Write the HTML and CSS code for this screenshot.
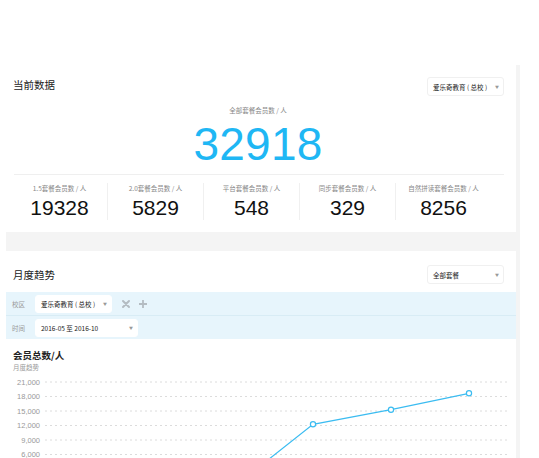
FILE: index.html
```html
<!DOCTYPE html>
<html lang="zh">
<head>
<meta charset="utf-8">
<link rel="stylesheet" href="styles.css">
</head>
<body>
<div class="wrap">
  <section class="card card-current">
    <div class="card-head card-head-current">
      <h2 class="card-title">当前数据</h2>
      <div class="select select-head"><span>爱乐奇教育 ( 总校 )</span><span class="arrow">▼</span></div>
    </div>
    <div class="total">
      <div class="total-label">全部套餐会员数 / 人</div>
      <div class="total-value">32918</div>
    </div>
    <div class="divider"></div>
    <div class="stats">
      <div class="stat"><div class="stat-label">1.5套餐会员数 / 人</div><div class="stat-value">19328</div></div>
      <div class="stat"><div class="stat-label">2.0套餐会员数 / 人</div><div class="stat-value">5829</div></div>
      <div class="stat"><div class="stat-label">平台套餐会员数 / 人</div><div class="stat-value">548</div></div>
      <div class="stat"><div class="stat-label">同步套餐会员数 / 人</div><div class="stat-value">329</div></div>
      <div class="stat"><div class="stat-label">自然拼读套餐会员数 / 人</div><div class="stat-value">8256</div></div>
    </div>
  </section>
  <section class="card card-trend">
    <div class="card-head card-head-trend">
      <h2 class="card-title">月度趋势</h2>
      <div class="select select-head"><span>全部套餐</span><span class="arrow">▼</span></div>
    </div>
    <div class="filters">
      <div class="filter-row">
        <span class="filter-label">校区</span>
        <div class="select select-school"><span>爱乐奇教育 ( 总校 )</span><span class="arrow">▼</span></div>
        <svg class="icon" width="10" height="10" viewBox="0 0 10 10"><path d="M2 2 L8 8 M8 2 L2 8" stroke="#b4bcc2" stroke-width="2" stroke-linecap="round"/></svg>
        <svg class="icon" width="10" height="10" viewBox="0 0 10 10"><path d="M5 1 V9 M1 5 H9" stroke="#b4bcc2" stroke-width="1.8"/></svg>
      </div>
      <div class="filter-row">
        <span class="filter-label">时间</span>
        <div class="select select-date"><span>2016-05 至 2016-10</span><span class="arrow">▼</span></div>
      </div>
    </div>
    <div class="chart-head">
      <div class="chart-title">会员总数/人</div>
      <div class="chart-sub">月度趋势</div>
    </div>
    <svg class="chart" width="516" height="90" viewBox="0 0 516 90">
      <g class="ylabels" font-size="7.5" fill="#999" text-anchor="end">
        <text x="40" y="10.5">21,000</text>
        <text x="40" y="25">18,000</text>
        <text x="40" y="39.5">15,000</text>
        <text x="40" y="54">12,000</text>
        <text x="40" y="68.5">9,000</text>
        <text x="40" y="83">6,000</text>
      </g>
      <g stroke="#dcdcdc" stroke-width="1" stroke-dasharray="2 3">
        <line x1="45" y1="8" x2="508" y2="8"/>
        <line x1="45" y1="22.5" x2="508" y2="22.5"/>
        <line x1="45" y1="37" x2="508" y2="37"/>
        <line x1="45" y1="51.5" x2="508" y2="51.5"/>
        <line x1="45" y1="66" x2="508" y2="66"/>
        <line x1="45" y1="80.5" x2="508" y2="80.5"/>
      </g>
      <polyline points="235,112 313,50.3 391,35.7 469,19.3" fill="none" stroke="#3bbcf1" stroke-width="1.2"/>
      <g fill="#fff" stroke="#3bbcf1" stroke-width="1.2">
        <circle cx="313" cy="50.3" r="2.6"/>
        <circle cx="391" cy="35.7" r="2.6"/>
        <circle cx="469" cy="19.3" r="2.6"/>
      </g>
    </svg>
  </section>
</div>
</body>
</html>
```

FILE: styles.css
```css
html, body {
  margin: 0;
  padding: 0;
  background: #fff;
}
body {
  font-family: "Liberation Sans", "Noto Sans CJK SC", sans-serif;
  color: #333;
}
.wrap {
  margin-top: 65px;
  width: 516px;
  padding-right: 4px;
  background: linear-gradient(to right, #fff 6px, #f4f4f4 6px);
  display: flex;
  flex-direction: column;
  gap: 19px;
}
.card {
  background: #fff;
}
.card-current {
  height: 167px;
}
.card-head {
  display: flex;
  justify-content: space-between;
  align-items: center;
  padding: 12px 12px 0 13px;
  height: 19px;
}
.card-head-current .card-title {
  margin-top: -5px;
}
.card-head-trend {
  padding-top: 14px;
  padding-bottom: 8px;
}
.card-title {
  margin: 0;
  font-family: "Noto Sans CJK SC", sans-serif;
  font-size: 10.5px;
  font-weight: 400;
  color: #222;
}
.select {
  box-sizing: border-box;
  height: 19px;
  background: #fff;
  border: 1px solid #f0f0f0;
  border-radius: 3px;
  display: flex;
  align-items: center;
  justify-content: space-between;
  padding: 0 4px 0 5px;
  font-family: "Noto Sans CJK SC", sans-serif;
  font-size: 6.5px;
  color: #222;
  white-space: nowrap;
}
.select-head {
  width: 77px;
}
.arrow {
  font-size: 4px;
  color: #999;
}
.total {
  text-align: center;
  margin-top: 9px;
}
.total-label {
  font-family: "Noto Sans CJK SC", sans-serif;
  font-size: 6.5px;
  line-height: 10px;
  color: #888;
}
.total-value {
  font-size: 46px;
  line-height: 46px;
  margin-top: 6px;
  color: #1fb7f4;
  letter-spacing: 0.2px;
}
.divider {
  height: 1px;
  background: #efefef;
  margin: 7px 12px 0 14px;
}
.stats {
  display: flex;
  padding-left: 12px;
  margin-top: 8px;
}
.stat {
  width: 95px;
  text-align: center;
}
.stat + .stat {
  border-left: 1px solid #f0f0f0;
}
.stat-label {
  font-family: "Noto Sans CJK SC", sans-serif;
  font-size: 6.5px;
  line-height: 10px;
  color: #888;
}
.stat-value {
  font-size: 21px;
  line-height: 24px;
  margin-top: 3px;
  color: #111;
}
.filters {
  background: #e7f5fc;
  margin-left: 6px;
}
.filter-row {
  height: 23px;
  display: flex;
  align-items: center;
  padding-left: 6px;
}
.filter-row + .filter-row {
  border-top: 1px solid #d8ecf5;
}
.filter-label {
  width: 23px;
  font-family: "Noto Sans CJK SC", sans-serif;
  font-size: 6.5px;
  color: #999;
}
.select-school {
  width: 77px;
  height: 18px;
  border-color: #fff;
  margin-right: 9px;
}
.select-date {
  width: 103px;
  height: 18px;
  border-color: #fff;
}
.icon {
  margin-right: 7px;
}
.chart-head {
  padding: 10px 0 0 13px;
}
.chart-title {
  font-family: "Noto Sans CJK SC", sans-serif;
  font-size: 9.5px;
  font-weight: 700;
  line-height: 13px;
  color: #222;
}
.chart-sub {
  font-family: "Noto Sans CJK SC", sans-serif;
  font-size: 6.5px;
  line-height: 11px;
  color: #999;
}
.chart {
  display: block;
  margin-top: 1px;
  font-family: "Liberation Sans", sans-serif;
}
```
